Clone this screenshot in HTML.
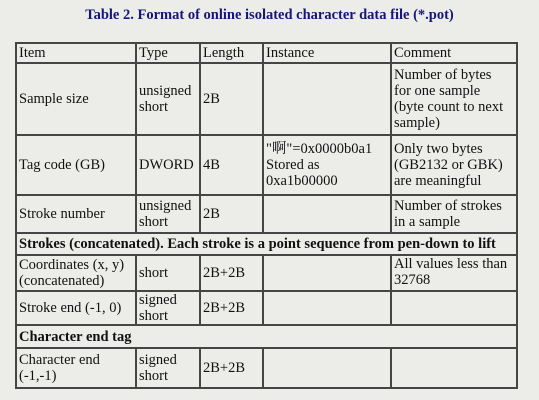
<!DOCTYPE html>
<html><head><meta charset="utf-8"><style>
html,body{margin:0;padding:0;}
body{width:539px;height:400px;background:#ecece9;position:relative;overflow:hidden;font-family:"Liberation Serif","Noto Serif CJK SC",serif;color:#111;}
.t{position:absolute;top:7px;left:0;width:539px;text-align:center;font-weight:bold;color:#16167a;font-size:14.5px;}
table{position:absolute;left:15px;top:42px;border-collapse:collapse;table-layout:fixed;width:501px;font-size:14.5px;line-height:16px;}
td{border:2px solid #454545;padding:0 2px;vertical-align:middle;overflow:hidden;}
td.top{vertical-align:top;}
td.c{padding-right:10px;}
</style></head><body>
<div class="t">Table 2. Format of online isolated character data file (*.pot)</div>
<table>
<colgroup><col style="width:120px"><col style="width:64px"><col style="width:63px"><col style="width:128px"><col style="width:126px"></colgroup>
<tr style="height:20px"><td>Item</td><td>Type</td><td>Length</td><td>Instance</td><td>Comment</td></tr>
<tr style="height:72px"><td>Sample size</td><td>unsigned short</td><td>2B</td><td></td><td class="c">Number of bytes for one sample (byte count to next sample)</td></tr>
<tr style="height:60px"><td>Tag code (GB)</td><td>DWORD</td><td>4B</td><td>"啊"=0x0000b0a1 Stored as 0xa1b00000</td><td class="c">Only two bytes (GB2132 or GBK) are meaningful</td></tr>
<tr style="height:38px"><td>Stroke number</td><td>unsigned short</td><td>2B</td><td></td><td class="c">Number of strokes in a sample</td></tr>
<tr style="height:22px"><td colspan="5" style="white-space:nowrap"><b>Strokes (concatenated). Each stroke is a point sequence from pen-down to lift</b></td></tr>
<tr style="height:36px"><td>Coordinates (x, y) (concatenated)</td><td>short</td><td>2B+2B</td><td></td><td class="top">All values less than 32768</td></tr>
<tr style="height:34px"><td>Stroke end (-1, 0)</td><td>signed short</td><td>2B+2B</td><td></td><td></td></tr>
<tr style="height:23px"><td colspan="5"><b>Character end tag</b></td></tr>
<tr style="height:40px"><td>Character end (-1,-1)</td><td>signed short</td><td>2B+2B</td><td></td><td></td></tr>
</table>
</body></html>
